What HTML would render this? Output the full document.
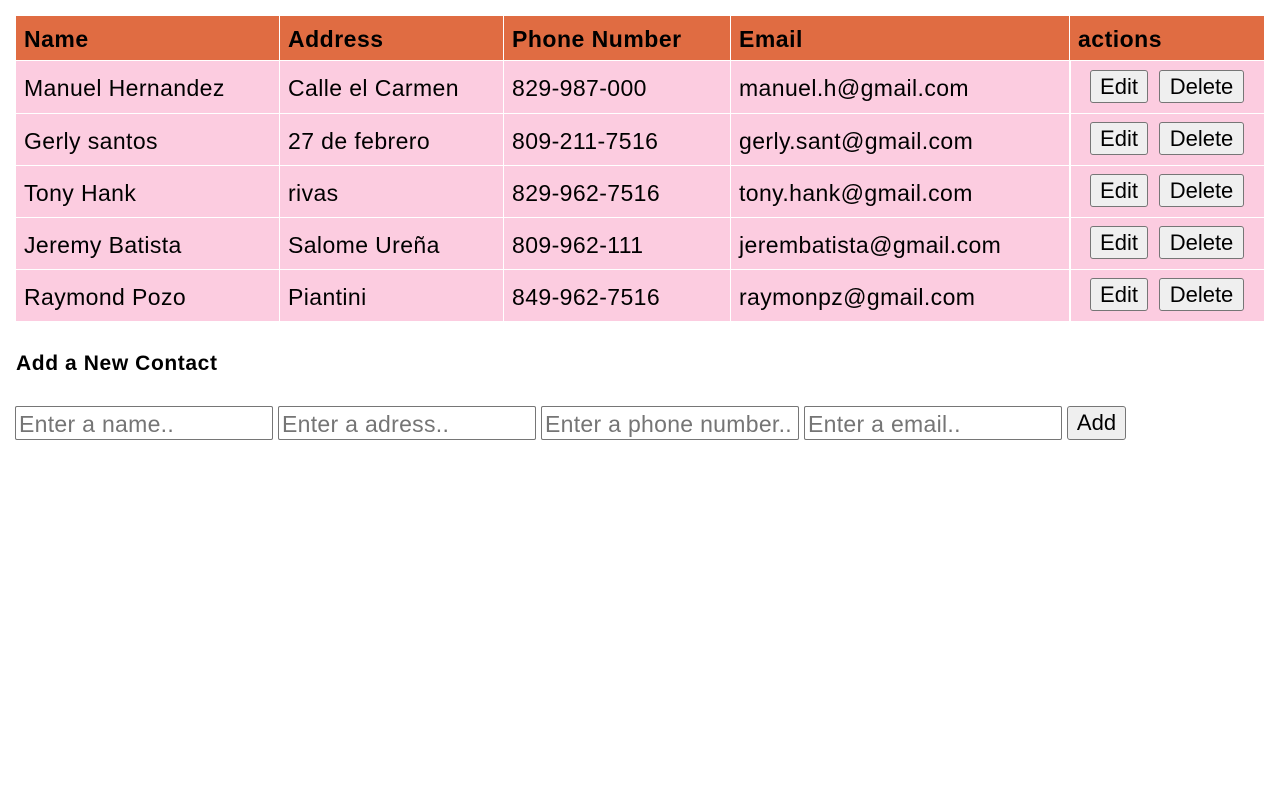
<!DOCTYPE html>
<html><head><style>
*{box-sizing:border-box;margin:0;padding:0}
body{width:1280px;height:800px;background:#fff;font-family:"Liberation Sans",Arial,sans-serif;color:#000;position:relative;overflow:hidden}
.c{position:absolute;background:#fccce0;font-size:23px;letter-spacing:0.4px;padding-left:8px;padding-top:3px;display:flex;align-items:center;white-space:nowrap}
.h{background:#e06c42;font-weight:bold;height:44px;top:16px;letter-spacing:0.5px}
.btn{position:absolute;height:33px;background:#efefef;border:1px solid #767676;border-radius:3px;font-size:22px;display:flex;align-items:center;justify-content:center;font-family:"Liberation Sans",Arial,sans-serif}
.in{position:absolute;top:406px;height:34px;width:258px;border:1px solid #767676;border-radius:2px;font-size:23px;letter-spacing:0.3px;color:#757575;padding-left:3px;padding-top:2px;display:flex;align-items:center;white-space:nowrap;overflow:hidden}
</style></head><body>
<div class="c h" style="left:16px;width:263px">Name</div>
<div class="c h" style="left:280px;width:223px">Address</div>
<div class="c h" style="left:504px;width:226px">Phone Number</div>
<div class="c h" style="left:731px;width:338px">Email</div>
<div class="c h" style="left:1070px;width:194px">actions</div>

<div class="c" style="left:16px;top:61px;width:263px;height:52px">Manuel Hernandez</div>
<div class="c" style="left:280px;top:61px;width:223px;height:52px">Calle el Carmen</div>
<div class="c" style="left:504px;top:61px;width:226px;height:52px">829-987-000</div>
<div class="c" style="left:731px;top:61px;width:338px;height:52px">manuel.h@gmail.com</div>
<div class="c" style="left:1071px;top:61px;width:193px;height:52px"></div>

<div class="c" style="left:16px;top:114px;width:263px;height:51px">Gerly santos</div>
<div class="c" style="left:280px;top:114px;width:223px;height:51px">27 de febrero</div>
<div class="c" style="left:504px;top:114px;width:226px;height:51px">809-211-7516</div>
<div class="c" style="left:731px;top:114px;width:338px;height:51px">gerly.sant@gmail.com</div>
<div class="c" style="left:1071px;top:114px;width:193px;height:51px"></div>

<div class="c" style="left:16px;top:166px;width:263px;height:51px">Tony Hank</div>
<div class="c" style="left:280px;top:166px;width:223px;height:51px">rivas</div>
<div class="c" style="left:504px;top:166px;width:226px;height:51px">829-962-7516</div>
<div class="c" style="left:731px;top:166px;width:338px;height:51px">tony.hank@gmail.com</div>
<div class="c" style="left:1071px;top:166px;width:193px;height:51px"></div>

<div class="c" style="left:16px;top:218px;width:263px;height:51px">Jeremy Batista</div>
<div class="c" style="left:280px;top:218px;width:223px;height:51px">Salome Ureña</div>
<div class="c" style="left:504px;top:218px;width:226px;height:51px">809-962-111</div>
<div class="c" style="left:731px;top:218px;width:338px;height:51px">jerembatista@gmail.com</div>
<div class="c" style="left:1071px;top:218px;width:193px;height:51px"></div>

<div class="c" style="left:16px;top:270px;width:263px;height:51px">Raymond Pozo</div>
<div class="c" style="left:280px;top:270px;width:223px;height:51px">Piantini</div>
<div class="c" style="left:504px;top:270px;width:226px;height:51px">849-962-7516</div>
<div class="c" style="left:731px;top:270px;width:338px;height:51px">raymonpz@gmail.com</div>
<div class="c" style="left:1071px;top:270px;width:193px;height:51px"></div>

<div class="btn" style="left:1090px;top:70px;width:58px">Edit</div><div class="btn" style="left:1159px;top:70px;width:85px">Delete</div>
<div class="btn" style="left:1090px;top:122px;width:58px">Edit</div><div class="btn" style="left:1159px;top:122px;width:85px">Delete</div>
<div class="btn" style="left:1090px;top:174px;width:58px">Edit</div><div class="btn" style="left:1159px;top:174px;width:85px">Delete</div>
<div class="btn" style="left:1090px;top:226px;width:58px">Edit</div><div class="btn" style="left:1159px;top:226px;width:85px">Delete</div>
<div class="btn" style="left:1090px;top:278px;width:58px">Edit</div><div class="btn" style="left:1159px;top:278px;width:85px">Delete</div>

<div style="position:absolute;left:16px;top:352px;font-size:21px;font-weight:bold;letter-spacing:0.6px">Add a New Contact</div>
<div class="in" style="left:15px">Enter a name..</div>
<div class="in" style="left:278px">Enter a adress..</div>
<div class="in" style="left:541px">Enter a phone number..</div>
<div class="in" style="left:804px">Enter a email..</div>
<div class="btn" style="left:1067px;top:406px;width:59px;height:34px">Add</div>
</body></html>
